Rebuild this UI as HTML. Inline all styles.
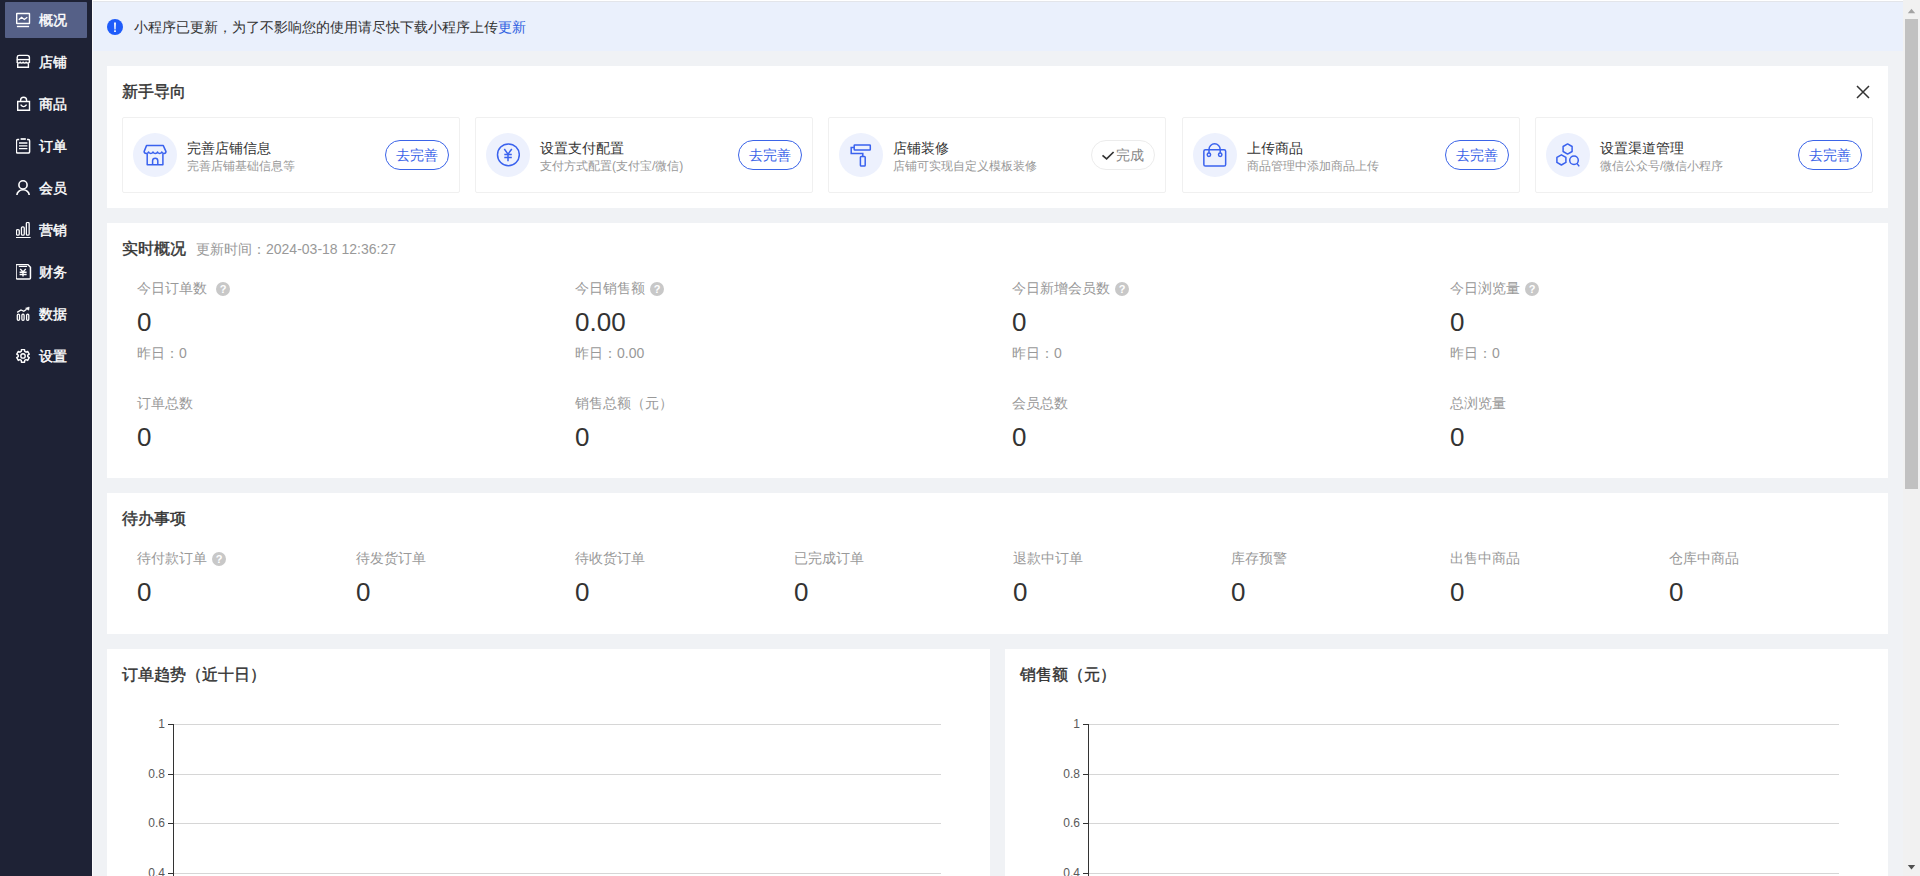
<!DOCTYPE html>
<html><head><meta charset="utf-8">
<style>
*{box-sizing:border-box;margin:0;padding:0}
html,body{width:1920px;height:876px;overflow:hidden}
body{position:relative;background:#f0f2f5;font-family:"Liberation Sans",sans-serif;color:#333}
.abs{position:absolute}
#side{position:absolute;left:0;top:0;width:92px;height:876px;background:#1e2235}
.mi{position:absolute;left:0;width:92px;height:35px}
.mi.act{left:5px;width:82px;height:36px;background:#556087;border-radius:1px}
.mi svg{position:absolute;left:16px;top:10px}
.mi span{position:absolute;left:39px;top:1px;font-size:14px;line-height:35px;color:#fff;font-weight:normal;-webkit-text-stroke:0.4px #fff;white-space:nowrap}
.mi.act svg{left:11px}
.mi.act span{left:34px}
#notice{position:absolute;left:93px;top:0;width:1810px;height:51px;background:#eaf0fc}
.card{position:absolute;background:#fff}
.ttl{position:absolute;left:15px;font-size:16px;font-weight:normal;-webkit-text-stroke:0.4px #333;color:#333;white-space:nowrap;line-height:20px}
.gbox{position:absolute;top:51px;width:338px;height:76px;border:1px solid #f0f0f0;border-radius:2px}
.gic{position:absolute;left:10px;top:15px;width:44px;height:44px;border-radius:50%;background:#edf1fd}
.gic svg{position:absolute;left:10px;top:10px}
.gt{position:absolute;left:64px;top:22px;font-size:14px;color:#333;white-space:nowrap;line-height:16px}
.gs{position:absolute;left:64px;top:41px;font-size:12px;color:#999;white-space:nowrap;line-height:15px}
.gbtn{position:absolute;right:10px;top:22px;width:64px;height:30px;border:1px solid #3b64e8;border-radius:15px;color:#3b64e8;font-size:14px;text-align:center;line-height:28px;white-space:nowrap}
.gbtn.done{border-color:#ececec;color:#888}
.lab{position:absolute;font-size:14px;color:#999;white-space:nowrap;line-height:18px}
.num{position:absolute;font-size:26px;color:#333;white-space:nowrap;line-height:30px}
.yes{position:absolute;font-size:14px;color:#999;white-space:nowrap;line-height:16px}
.q{display:inline-block;width:14px;height:14px;border-radius:50%;background:#c8c8c8;color:#fff;font-size:11px;line-height:14px;text-align:center;font-weight:bold;vertical-align:top;margin-left:8px;margin-top:3px}
</style></head><body>

<div id="side">
  <div class="mi act" style="top:2px"><svg width="16" height="16" viewBox="0 0 16 16" fill="none" stroke="#fff" stroke-width="1.4"><rect x="0.7" y="1.5" width="12.8" height="10" rx="0.3"/><polyline points="2.8,7.8 5.6,5.3 8.3,7.5 11.3,5.3" stroke-width="1.3"/><line x1="0.9" y1="14.5" x2="13.1" y2="14.5"/></svg><span>概况</span></div>
  <div class="mi" style="top:44px"><svg width="16" height="16" viewBox="0 0 16 16" fill="none" stroke="#fff" stroke-width="1.4"><path d="M1.2,8.8 V3.2 A2,2 0 0 1 3.2,1.4 H11.2 A2,2 0 0 1 13.4,3.2 V8.8"/><path d="M0.8,5.6 H13.6"/><path d="M0.9,8.2 Q2.6,9.8 4.2,8.2 Q5.6,9.8 7.1,8.2 Q8.6,9.8 10.1,8.2 Q11.8,9.8 13.5,8.2"/><path d="M1.7,9.2 V13.3 H12.4 V9.2"/></svg><span>店铺</span></div>
  <div class="mi" style="top:86px"><svg width="16" height="16" viewBox="0 0 16 16" fill="none" stroke="#fff" stroke-width="1.4"><path d="M1.7,5.5 H13.5 V14.2 H1.7 Z"/><path d="M4.6,5.5 V4.2 A3,3 0 0 1 10.6,4.2 V5.5"/><path d="M4.6,8.6 Q7.6,12.6 10.6,8.6"/></svg><span>商品</span></div>
  <div class="mi" style="top:128px"><svg width="16" height="16" viewBox="0 0 16 16" fill="none" stroke="#fff" stroke-width="1.5"><path d="M3.2,1.6 H1.6 A1.2,1.2 0 0 0 0.4,2.8 V13.8 A1.2,1.2 0 0 0 1.6,15 H12.4 A1.2,1.2 0 0 0 13.6,13.8 V2.8 A1.2,1.2 0 0 0 12.4,1.6 H11"/><path d="M4.6,1 H9.8" stroke-width="1.7"/><path d="M3,5 H11.4 M3,7.8 H11.4 M3,10.6 H11.4" stroke-width="1.3"/></svg><span>订单</span></div>
  <div class="mi" style="top:170px"><svg width="16" height="16" viewBox="0 0 16 16" fill="none" stroke="#fff" stroke-width="1.6"><circle cx="7" cy="4.9" r="4.1"/><path d="M0.9,15 A6.15,5.2 0 0 1 13.2,15"/></svg><span>会员</span></div>
  <div class="mi" style="top:212px"><svg width="16" height="16" viewBox="0 0 16 16" fill="none" stroke="#fff" stroke-width="1.3"><rect x="0.45" y="7.6" width="2.8" height="5.6" rx="1.2"/><rect x="5.45" y="4.85" width="2.8" height="8.35" rx="1.2"/><rect x="10.35" y="0.45" width="2.8" height="12.75" rx="1.2"/><path d="M-0.8,15.6 H14.6" stroke-width="1.2"/></svg><span>营销</span></div>
  <div class="mi" style="top:254px"><svg width="16" height="16" viewBox="0 0 16 16" fill="none" stroke="#fff" stroke-width="1.5"><path d="M1.2,0.55 H11.8 L14.45,3.2 V13.9 A1,1 0 0 1 13.45,14.9 H1.1 A1,1 0 0 1 0.05,13.9 V1.6 A1,1 0 0 1 1.2,0.55 Z"/><path d="M2.8,2.4 H11.1" stroke-width="1.2"/><path d="M4.2,4.9 L7,8 L9.8,4.9 M3.6,8.3 H10.6 M3.6,10.5 H10.6 M7,8 V12.4" stroke-width="1.4"/></svg><span>财务</span></div>
  <div class="mi" style="top:296px"><svg width="16" height="16" viewBox="0 0 16 16" fill="none" stroke="#fff" stroke-width="1.3"><rect x="1.3" y="8.2" width="2.2" height="6.1" rx="1"/><rect x="5.9" y="8.2" width="2.2" height="6.1" rx="1"/><rect x="10.6" y="8.2" width="2.2" height="6.1" rx="1"/><path d="M1.2,6.4 L5,3.9 L7.8,5.3 L10.6,3.2"/><path d="M9.6,2.2 L13.2,1.1 L12.8,4.2 Z" fill="#fff" stroke-width="0.6" stroke-linejoin="round"/></svg><span>数据</span></div>
  <div class="mi" style="top:338px"><svg width="16" height="16" viewBox="0 0 16 16" fill="none" stroke="#fff" stroke-width="1.4"><path d="M5.28,3.42 L5.43,1.59 L8.57,1.59 L8.72,3.42 L10.02,4.17 L11.68,3.38 L13.25,6.11 L11.74,7.15 L11.74,8.65 L13.25,9.69 L11.68,12.42 L10.02,11.63 L8.72,12.38 L8.57,14.21 L5.43,14.21 L5.28,12.38 L3.98,11.63 L2.32,12.42 L0.75,9.69 L2.26,8.65 L2.26,7.15 L0.75,6.11 L2.32,3.38 L3.98,4.17 Z" stroke-linejoin="round"/><circle cx="7" cy="7.9" r="2.2"/></svg><span>设置</span></div>
</div>

<div id="notice">
  <svg class="abs" style="left:14px;top:19px" width="16" height="16" viewBox="0 0 16 16"><circle cx="8" cy="8" r="8" fill="#1f5cfa"/><path d="M7.05,3.4 H8.95 L8.6,10.4 H7.4 Z" fill="#fff"/><rect x="7.15" y="11.3" width="1.7" height="1.7" fill="#fff"/></svg>
  <div class="abs" style="left:41px;top:17px;font-size:14px;line-height:20px;color:#333;white-space:nowrap">小程序已更新，为了不影响您的使用请尽快下载小程序上传<span style="color:#2f5fe0">更新</span></div>
</div>

<!-- card 1 -->
<div class="card" style="left:107px;top:66px;width:1781px;height:142px">
  <div class="ttl" style="top:16px">新手导向</div>
<div class="gbox" style="left:15px"><div class="gic"><svg width="24" height="24" viewBox="0 0 24 24" fill="none" stroke="#3a62ee" stroke-width="1.5" stroke-linejoin="round"><path d="M3.5,2.6 H20.3 L23,8.6 Q23,10.4 21.1,10.4 Q19.2,10.4 18.8,8.9 Q18.4,10.4 16.7,10.4 Q14.8,10.4 14.5,8.9 Q14,10.4 12.2,10.4 Q10.4,10.4 10,8.9 Q9.6,10.4 7.8,10.4 Q6,10.4 5.6,8.9 Q5.2,10.4 3.3,10.4 Q1.1,10.4 1.1,8.6 Z"/><path d="M4.2,10.6 V21.7 H19.9 V10.6"/><path d="M9.6,21.7 V17.8 A2.6,2.6 0 0 1 14.8,17.8 V21.7"/></svg></div><div class="gt">完善店铺信息</div><div class="gs">完善店铺基础信息等</div><div class="gbtn">去完善</div></div>
<div class="gbox" style="left:368px"><div class="gic"><svg width="24" height="24" viewBox="0 0 24 24" fill="none" stroke="#3a62ee" stroke-width="1.5"><circle cx="12.4" cy="11.8" r="10.9"/><path d="M8.3,6 L12,11.1 L15.8,6 M8.3,11.6 H15.8 M8.3,14.6 H15.8 M12,11.1 V18.3"/></svg></div><div class="gt">设置支付配置</div><div class="gs">支付方式配置(支付宝/微信)</div><div class="gbtn">去完善</div></div>
<div class="gbox" style="left:721px"><div class="gic"><svg width="24" height="24" viewBox="0 0 24 24" fill="none" stroke="#3a62ee" stroke-width="1.5"><rect x="5.2" y="1.9" width="16.1" height="5.1" rx="0.6"/><path d="M5.2,4.5 H2.2 V10.4 H13.8 V13"/><rect x="11.4" y="13.5" width="4.8" height="9.6" rx="0.8"/></svg></div><div class="gt">店铺装修</div><div class="gs">店铺可实现自定义模板装修</div><div class="gbtn done"><svg style="position:absolute;left:9px;top:10px" width="14" height="10" viewBox="0 0 14 10" fill="none" stroke="#333" stroke-width="1.7"><path d="M1.5,4.4 L5.6,7.9 L12.6,1"/></svg><span style="position:absolute;left:24px;top:0">完成</span></div></div>
<div class="gbox" style="left:1075px"><div class="gic"><svg width="24" height="24" viewBox="0 0 24 24" fill="none" stroke="#3a62ee" stroke-width="1.5"><rect x="0.85" y="6.75" width="21.8" height="16.3" rx="1.6"/><path d="M6,10.1 V6.4 A5.6,5.6 0 0 1 17.2,6.4 V10.1"/><circle cx="5.9" cy="11.8" r="1.7"/><circle cx="17.2" cy="11.8" r="1.7"/></svg></div><div class="gt">上传商品</div><div class="gs">商品管理中添加商品上传</div><div class="gbtn">去完善</div></div>
<div class="gbox" style="left:1428px"><div class="gic"><svg width="24" height="24" viewBox="0 0 24 24" fill="none" stroke="#3a62ee" stroke-width="1.5" stroke-linejoin="round"><path d="M11.6,0.9 L16.1,3.5 V8.5 L11.6,11.1 L7.1,8.5 V3.5 Z"/><path d="M5.4,11.8 L9.9,14.4 V19.4 L5.4,22 L0.9,19.4 V14.4 Z"/><circle cx="18" cy="17.2" r="4.3"/><path d="M21,20.4 L23.2,23.4"/></svg></div><div class="gt">设置渠道管理</div><div class="gs">微信公众号/微信小程序</div><div class="gbtn">去完善</div></div>

  <svg class="abs" style="left:1749px;top:19px" width="14" height="14" viewBox="0 0 14 14" stroke="#333" stroke-width="1.5"><path d="M1,1 L13,13 M13,1 L1,13"/></svg>
</div>

<!-- card 2 -->
<div class="card" style="left:107px;top:223px;width:1781px;height:255px">
  <div class="lab" style="left:30px;top:56px">今日订单数<span class="q" style="margin-left:9px">?</span></div><div class="num" style="left:30px;top:84px">0</div><div class="yes" style="left:30px;top:122px">昨日：0</div><div class="lab" style="left:30px;top:171px">订单总数</div><div class="num" style="left:30px;top:199px">0</div>
<div class="lab" style="left:468px;top:56px">今日销售额<span class="q" style="margin-left:5px">?</span></div><div class="num" style="left:468px;top:84px">0.00</div><div class="yes" style="left:468px;top:122px">昨日：0.00</div><div class="lab" style="left:468px;top:171px">销售总额（元）</div><div class="num" style="left:468px;top:199px">0</div>
<div class="lab" style="left:905px;top:56px">今日新增会员数<span class="q" style="margin-left:5px">?</span></div><div class="num" style="left:905px;top:84px">0</div><div class="yes" style="left:905px;top:122px">昨日：0</div><div class="lab" style="left:905px;top:171px">会员总数</div><div class="num" style="left:905px;top:199px">0</div>
<div class="lab" style="left:1343px;top:56px">今日浏览量<span class="q" style="margin-left:5px">?</span></div><div class="num" style="left:1343px;top:84px">0</div><div class="yes" style="left:1343px;top:122px">昨日：0</div><div class="lab" style="left:1343px;top:171px">总浏览量</div><div class="num" style="left:1343px;top:199px">0</div>
<div class="ttl" style="top:16px">实时概况<span style="font-size:14px;font-weight:normal;color:#999;margin-left:10px;-webkit-text-stroke:0">更新时间：2024-03-18 12:36:27</span></div>
</div>

<!-- card 3 -->
<div class="card" style="left:107px;top:493px;width:1781px;height:141px">
  <div class="ttl" style="top:16px">待办事项</div>
<div class="lab" style="left:30px;top:56px">待付款订单<span class="q" style="margin-left:5px">?</span></div><div class="num" style="left:30px;top:84px">0</div>
<div class="lab" style="left:249px;top:56px">待发货订单</div><div class="num" style="left:249px;top:84px">0</div>
<div class="lab" style="left:468px;top:56px">待收货订单</div><div class="num" style="left:468px;top:84px">0</div>
<div class="lab" style="left:687px;top:56px">已完成订单</div><div class="num" style="left:687px;top:84px">0</div>
<div class="lab" style="left:906px;top:56px">退款中订单</div><div class="num" style="left:906px;top:84px">0</div>
<div class="lab" style="left:1124px;top:56px">库存预警</div><div class="num" style="left:1124px;top:84px">0</div>
<div class="lab" style="left:1343px;top:56px">出售中商品</div><div class="num" style="left:1343px;top:84px">0</div>
<div class="lab" style="left:1562px;top:56px">仓库中商品</div><div class="num" style="left:1562px;top:84px">0</div>

</div>

<!-- charts -->
<div class="card" style="left:107px;top:649px;width:883px;height:227px">
  <div class="ttl" style="top:16px">订单趋势（近十日）</div><div class="abs" style="left:66px;top:75px;width:768px;height:1px;background:#d6d6d6"></div><div class="abs" style="left:61px;top:75px;width:5px;height:1px;background:#333"></div><div class="abs" style="left:6px;top:68px;width:52px;text-align:right;font-size:12px;line-height:14px;color:#5a5a5a">1</div><div class="abs" style="left:66px;top:125px;width:768px;height:1px;background:#d6d6d6"></div><div class="abs" style="left:61px;top:125px;width:5px;height:1px;background:#333"></div><div class="abs" style="left:6px;top:118px;width:52px;text-align:right;font-size:12px;line-height:14px;color:#5a5a5a">0.8</div><div class="abs" style="left:66px;top:174px;width:768px;height:1px;background:#d6d6d6"></div><div class="abs" style="left:61px;top:174px;width:5px;height:1px;background:#333"></div><div class="abs" style="left:6px;top:167px;width:52px;text-align:right;font-size:12px;line-height:14px;color:#5a5a5a">0.6</div><div class="abs" style="left:66px;top:224px;width:768px;height:1px;background:#d6d6d6"></div><div class="abs" style="left:61px;top:224px;width:5px;height:1px;background:#333"></div><div class="abs" style="left:6px;top:217px;width:52px;text-align:right;font-size:12px;line-height:14px;color:#5a5a5a">0.4</div><div class="abs" style="left:66px;top:75px;width:1px;height:200px;background:#333"></div>
</div>
<div class="card" style="left:1005px;top:649px;width:883px;height:227px">
  <div class="ttl" style="top:16px">销售额（元）</div><div class="abs" style="left:83px;top:75px;width:751px;height:1px;background:#d6d6d6"></div><div class="abs" style="left:78px;top:75px;width:5px;height:1px;background:#333"></div><div class="abs" style="left:23px;top:68px;width:52px;text-align:right;font-size:12px;line-height:14px;color:#5a5a5a">1</div><div class="abs" style="left:83px;top:125px;width:751px;height:1px;background:#d6d6d6"></div><div class="abs" style="left:78px;top:125px;width:5px;height:1px;background:#333"></div><div class="abs" style="left:23px;top:118px;width:52px;text-align:right;font-size:12px;line-height:14px;color:#5a5a5a">0.8</div><div class="abs" style="left:83px;top:174px;width:751px;height:1px;background:#d6d6d6"></div><div class="abs" style="left:78px;top:174px;width:5px;height:1px;background:#333"></div><div class="abs" style="left:23px;top:167px;width:52px;text-align:right;font-size:12px;line-height:14px;color:#5a5a5a">0.6</div><div class="abs" style="left:83px;top:224px;width:751px;height:1px;background:#d6d6d6"></div><div class="abs" style="left:78px;top:224px;width:5px;height:1px;background:#333"></div><div class="abs" style="left:23px;top:217px;width:52px;text-align:right;font-size:12px;line-height:14px;color:#5a5a5a">0.4</div><div class="abs" style="left:83px;top:75px;width:1px;height:200px;background:#333"></div>
</div>

<!-- edges -->
<div class="abs" style="left:92px;top:0;width:1px;height:876px;background:#fbfbfc"></div>
<div class="abs" style="left:92px;top:0;width:1828px;height:1px;background:#ffffff"></div>
<div class="abs" style="left:93px;top:1px;width:1827px;height:1px;background:#e3e5ea"></div>
<!-- scrollbar -->
<div class="abs" style="left:1903px;top:0;width:17px;height:876px;background:#f1f1f1"></div>
<div class="abs" style="left:1905px;top:19px;width:13px;height:470px;background:#c1c1c1"></div>
<svg class="abs" style="left:1903px;top:2px" width="17" height="17" viewBox="0 0 17 17"><path d="M4.8,11.2 L12.2,11.2 L8.5,6.8 Z" fill="#a3a3a3"/></svg>
<svg class="abs" style="left:1903px;top:859px" width="17" height="17" viewBox="0 0 17 17"><path d="M4.8,6 L12.2,6 L8.5,10.4 Z" fill="#505050"/></svg>

</body></html>
